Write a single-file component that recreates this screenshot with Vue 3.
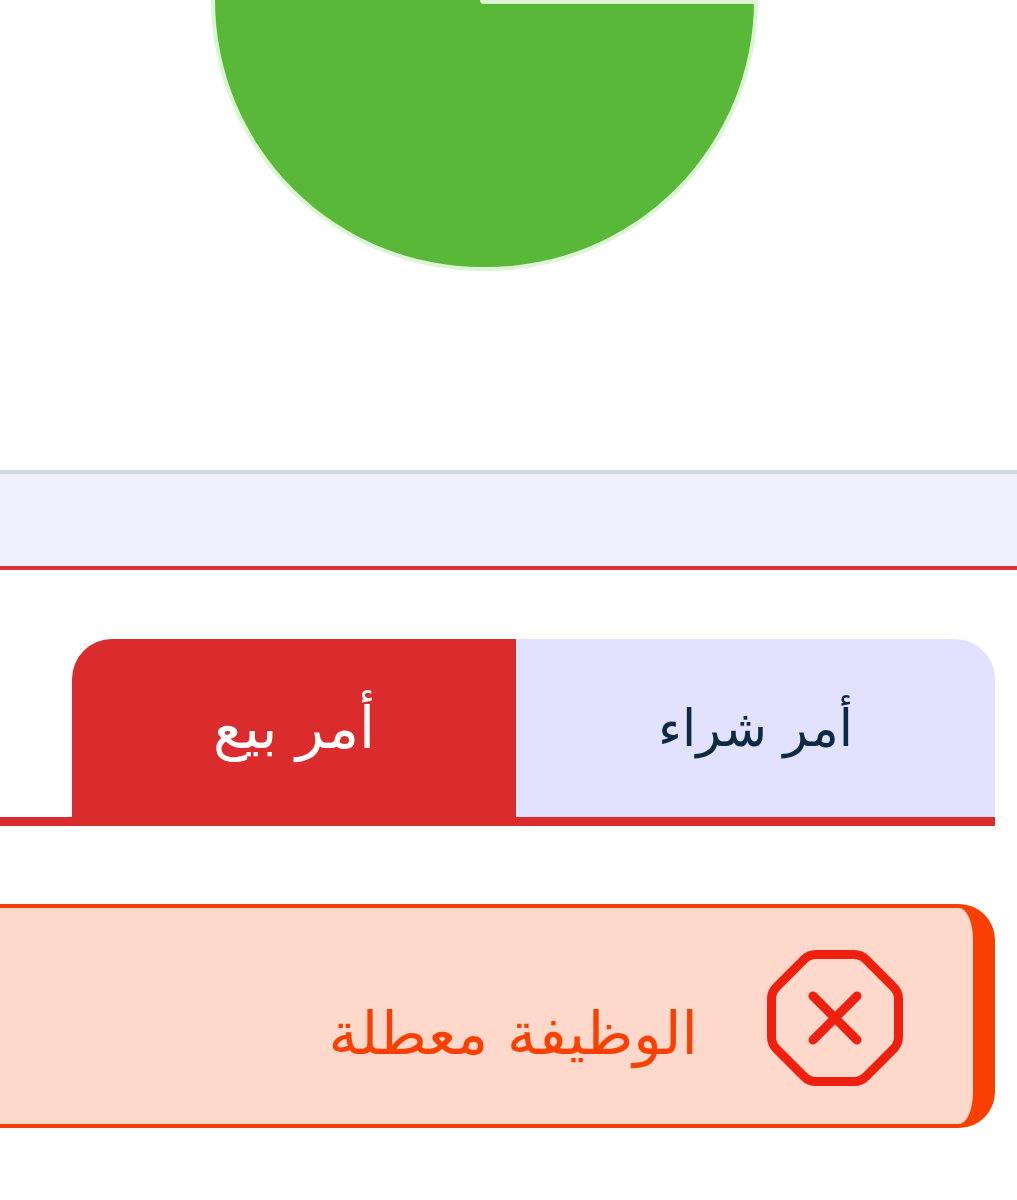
<script setup>
const tabs = [
  { label: 'أمر شراء', active: false },
  { label: 'أمر بيع', active: true },
]
</script>

<template>
  <div class="page" dir="rtl">
    <div class="gauge-wrap">
      <div class="gauge"><span class="gauge-strip"></span></div>
    </div>
    <div class="band"></div>
    <div class="tabs">
      <div v-for="tab in tabs" :key="tab.label" class="tab" :class="{ active: tab.active }">
        <span class="tab-label">{{ tab.label }}</span>
      </div>
    </div>
    <div class="alert">
      <svg class="alert-icon" viewBox="0 0 136 136" fill="none" stroke="#ee2010" stroke-width="9" stroke-linecap="round" stroke-linejoin="round">
        <path d="M49 4.5H87Q94 4.5 99 9.5L126.500 37Q131.500 42 131.500 49V87Q131.500 94 126.500 99L99 126.500Q94 131.500 87 131.500H49Q42 131.500 37 126.500L9.500 99Q4.500 94 4.500 87V49Q4.500 42 9.500 37L37 9.500Q42 4.500 49 4.500Z" />
        <path d="M46 46L90 90M90 46L46 90" />
      </svg>
      <span class="alert-text">الوظيفة معطلة</span>
    </div>
  </div>
</template>

<style scoped>
.page {
  width: 1017px;
  height: 1200px;
  overflow: hidden;
  background: #fff;
  font-family: "DejaVu Sans", sans-serif;
}
.gauge-wrap {
  direction: ltr;
  height: 470px;
  display: flex;
  align-items: flex-start;
  padding-left: 211px;
  box-sizing: border-box;
}
.gauge {
  position: relative;
  width: 547px;
  height: 271px;
  box-sizing: border-box;
  background: #5ab838;
  border: 4px solid #dcf5d5;
  border-top: none;
  border-radius: 0 0 273px 273px;
}
.gauge-strip {
  position: absolute;
  top: 0;
  right: 0;
  width: 274px;
  height: 4px;
  background: #dcf5d5;
  border-bottom-left-radius: 4px;
}
.band {
  height: 92px;
  background: #f0f0ff;
  border-top: 4px solid #cfd8dc;
  border-bottom: 4px solid #dc2f35;
}
.tabs {
  display: flex;
  margin-top: 69px;
  margin-right: 22px;
  padding-left: 72px;
  border-bottom: 9px solid #da2c2d;
}
.tab {
  flex: 1 1 0;
  height: 178px;
  display: flex;
  align-items: center;
  justify-content: center;
  background: #e2e2ff;
  color: #0b2b45;
  border-top-right-radius: 40px;
}
.tab.active {
  flex: 0 0 444px;
  background: #da2c2d;
  color: #fff;
  border-top-right-radius: 0;
  border-top-left-radius: 40px;
}
.tab-label {
  font-size: 51px;
  line-height: 1;
}
.tab.active .tab-label {
  font-size: 58px;
}
.alert {
  display: flex;
  align-items: flex-start;
  height: 224px;
  box-sizing: border-box;
  margin-top: 78px;
  margin-right: 22px;
  padding: 42px 70px 0 0;
  background: #ffd8cc;
  border: 4px solid #f94000;
  border-left: none;
  border-right-width: 22px;
  border-radius: 0 36px 36px 0;
}
.alert-icon {
  width: 136px;
  height: 136px;
  flex: none;
}
.alert-text {
  margin: 49px 69px 0 0;
  font-size: 59px;
  line-height: 1.2;
  color: #f94000;
}
</style>
